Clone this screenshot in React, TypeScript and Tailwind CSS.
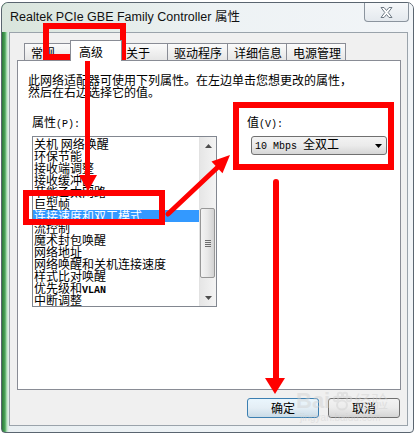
const ITEMS = [
  '关机 网络唤醒',
  '环保节能',
  '接收端调整',
  '接收缓冲区',
  '节能乙太网路',
  '巨型帧',
  '连接速度和双工模式',
  '流控制',
  '魔术封包唤醒',
  '网络地址',
  '网络唤醒和关机连接速度',
  '样式比对唤醒',
  '优先级和VLAN',
  '中断调整',
];

const TABS = [
  { label: '常规', w: 'w-[49px]' },
  { label: '高级', w: 'w-[48px]', active: true },
  { label: '关于', w: 'w-[49px]' },
  { label: '驱动程序', w: 'w-[61px]' },
  { label: '详细信息', w: 'w-[60px]' },
  { label: '电源管理', w: 'w-[60px]' },
];

const CJK = "font-['Noto_Sans_CJK_SC','Noto_Sans',sans-serif]";
const MONO = "font-['Liberation_Mono',monospace] text-[10px]";

function Tabs() {
  return (
    <div className="flex items-end h-[20px] pl-[7px]">
      {TABS.map((t, i) =>
        t.active ? (
          <div
            key={t.label}
            className="relative z-10 -mx-[2px] -ml-[3px] w-[52px] h-[21px] mb-[-1px] pl-[8px] pt-[5px] bg-white border border-b-0 border-[#898c95] text-[12px] leading-[12px]"
          >
            {t.label}
          </div>
        ) : (
          <div
            key={t.label}
            className={`${t.w} ${i > 0 ? '-ml-px' : ''} h-[17px] pl-[6px] pt-[3px] border border-b-0 border-[#898c95] bg-gradient-to-b from-[#fbfbfb] to-[#e6e6e6] text-[12px] leading-[12px]`}
          >
            {t.label}
          </div>
        )
      )}
    </div>
  );
}

function ScrollBar() {
  return (
    <div className="w-[17px] h-full flex flex-col border-l border-[#e2e2e2] bg-gradient-to-r from-[#e6e6e6] to-[#f4f4f4]">
      <div className="h-[17px] flex items-center justify-center">
        <svg width="7" height="4" viewBox="0 0 7 4">
          <polygon points="3.5,0 7,4 0,4" fill="#4d4d4d" />
        </svg>
      </div>
      <div className="h-[54px]" />
      <div className="w-[15px] h-[70px] rounded-[2px] border border-[#979797] bg-gradient-to-r from-[#f4f4f4] via-[#e8e8e8] to-[#d3d3d3] flex flex-col items-center justify-center gap-[1px]">
        <div className="w-[6px] h-px bg-[#6d6d6d]" />
        <div className="w-[6px] h-px bg-[#6d6d6d]" />
        <div className="w-[6px] h-px bg-[#6d6d6d]" />
        <div className="w-[6px] h-px bg-[#6d6d6d]" />
      </div>
      <div className="flex-1" />
      <div className="h-[17px] flex items-center justify-center">
        <svg width="7" height="4" viewBox="0 0 7 4">
          <polygon points="0,0 7,0 3.5,4" fill="#4d4d4d" />
        </svg>
      </div>
    </div>
  );
}

function ItemText({ text }: { text: string }) {
  if (text.endsWith('VLAN')) {
    return (
      <>
        {text.replace('VLAN', '')}
        <span className={`${MONO} font-bold`}>VLAN</span>
      </>
    );
  }
  return <>{text}</>;
}

function Annotations() {
  return (
    <svg className="absolute inset-0 pointer-events-none" width="420" height="435" viewBox="0 0 420 435">
      <g fill="none" stroke="#ff0000" strokeWidth="6">
        <rect x="46" y="26" width="77" height="31" />
        <rect x="26" y="193" width="136" height="29" />
        <rect x="236" y="105" width="155" height="62" />
      </g>
      <g stroke="#ff0000" strokeLinecap="round">
        <line x1="87.5" y1="60" x2="87.5" y2="178" strokeWidth="5" strokeLinecap="butt" />
        <line x1="168" y1="214" x2="219" y2="166" strokeWidth="5" />
        <line x1="276" y1="182" x2="276" y2="380" strokeWidth="6" />
      </g>
      <g fill="#ff0000">
        <polygon points="79,175 97,175 88,191" />
        <polygon points="230,155 222.5,173.2 211.5,161.6" />
        <polygon points="265,378 285,378 275,394" />
      </g>
    </svg>
  );
}

function Watermark() {
  return (
    <div className="absolute left-[296px] top-[389px] pointer-events-none opacity-45 text-[#cfcfcf]">
      <div className="flex items-center">
        <span className="font-['Liberation_Sans',sans-serif] font-bold text-[22px] leading-[24px]">Bai</span>
        <svg width="22" height="22" viewBox="0 0 22 22" className="mx-[1px]">
          <g fill="none" stroke="#cfcfcf" strokeWidth="2">
            <ellipse cx="11" cy="15" rx="5" ry="4.5" />
            <circle cx="5" cy="9" r="2.2" />
            <circle cx="9" cy="5" r="2.2" />
            <circle cx="14" cy="5" r="2.2" />
            <circle cx="18" cy="9" r="2.2" />
          </g>
        </svg>
        <span className={`${CJK} text-[17px] leading-[24px]`}>经验</span>
      </div>
      <div className="font-['Liberation_Sans',sans-serif] text-[10px] leading-[10px] pl-[4px]">jingyan.baidu.com</div>
    </div>
  );
}

export default function App() {
  return (
    <div className={`relative w-[420px] h-[435px] bg-white overflow-hidden pl-px pt-[2px] text-black ${CJK}`}>
      <div className="w-[413px] h-[431px] rounded-t-[7px] rounded-b-[4px] border border-[#5a6570] bg-[linear-gradient(to_right,#2c7639_0px,#4aa65a_3px,#bfe6c6_5px,#e9eff2_7px,#eef3f6_60%,#f1f4f7_100%)] flex flex-col">
        <div className="h-[29px] flex justify-between rounded-t-[6px] bg-gradient-to-r from-[#d9e5dc] via-[#edf2f4] to-[#f2f5f8]">
          <div className="pl-[8px] pt-[8px] font-['Liberation_Sans','Noto_Sans_CJK_SC',sans-serif] text-[12.5px] leading-[12px] text-[#111]">
            Realtek PCIe GBE Family Controller 属性
          </div>
          <div className="mr-[4px] w-[45px] h-[19px] rounded-b-[4px] border border-t-0 border-[#8b949e] bg-gradient-to-b from-[#f6f8fa] to-[#e4e9ee] flex items-center justify-center">
            <svg width="13" height="11" viewBox="0 0 13 11">
              <polygon
                points="1,0.5 4,0.5 6.5,3.5 9,0.5 12,0.5 8.2,5.5 12,10.5 9,10.5 6.5,7.5 4,10.5 1,10.5 4.8,5.5"
                fill="#ffffff"
                stroke="#6f7a85"
                strokeWidth="1"
                strokeLinejoin="round"
              />
            </svg>
          </div>
        </div>

        <div className="ml-[7px] w-[399px] h-[394px] border border-[#9aa3ab] bg-[#f0f0f0] pl-[7px] pt-[7px]">
          <Tabs />
          <div className="w-[384px] h-[330px] border border-[#898c95] bg-white">
            <div className="pl-[10px] pt-[13px] text-[12px] leading-[12px]">
              <div>此网络适配器可使用下列属性。在左边单击您想更改的属性，</div>
              <div>然后在右边选择它的值。</div>
            </div>
            <div className="flex mt-[18px]">
              <div className="ml-[14px] w-[185px]">
                <div className="text-[12px] leading-[12px]">
                  属性<span className={MONO}>(P):</span>
                </div>
                <div className="mt-[5px] w-[185px] h-[171px] border border-[#828790] bg-white flex overflow-hidden">
                  <div className="w-[166px] pt-px overflow-hidden">
                    {ITEMS.map((it, i) => (
                      <div
                        key={it}
                        className={`h-[12px] pl-px text-[12px] leading-[12px] whitespace-nowrap ${i === 6 ? 'bg-[#3399ff] text-white' : ''}`}
                      >
                        <ItemText text={it} />
                      </div>
                    ))}
                  </div>
                  <ScrollBar />
                </div>
              </div>
              <div className="ml-[30px]">
                <div className="text-[12px] leading-[12px]">
                  值<span className={MONO}>(V):</span>
                </div>
                <div className="mt-[5px] ml-[4px] w-[136px] h-[19px] rounded-[3px] border border-[#707070] bg-gradient-to-b from-[#f3f3f3] via-[#ebebeb] to-[#d6d6d6] flex items-center justify-between pl-[3px] pr-[4px]">
                  <span className="text-[12px] leading-[12px] whitespace-nowrap">
                    <span className={MONO}>10 Mbps </span>全双工
                  </span>
                  <svg width="7" height="4" viewBox="0 0 7 4">
                    <polygon points="0,0 7,0 3.5,4" fill="#000" />
                  </svg>
                </div>
              </div>
            </div>
          </div>
          <div className="flex justify-end gap-[9px] pr-[7px] mt-[8px]">
            <button className="w-[72px] h-[20px] rounded-[3px] border border-[#3c7fb1] bg-gradient-to-b from-[#eaf6fd] via-[#e4eef5] to-[#c9dbe7] text-[12px] leading-[12px]">
              确定
            </button>
            <button className="w-[72px] h-[20px] rounded-[3px] border border-[#707070] bg-gradient-to-b from-[#f3f3f3] via-[#ebebeb] to-[#d5d5d5] text-[12px] leading-[12px]">
              取消
            </button>
          </div>
        </div>
      </div>
      <Watermark />
      <Annotations />
    </div>
  );
}
